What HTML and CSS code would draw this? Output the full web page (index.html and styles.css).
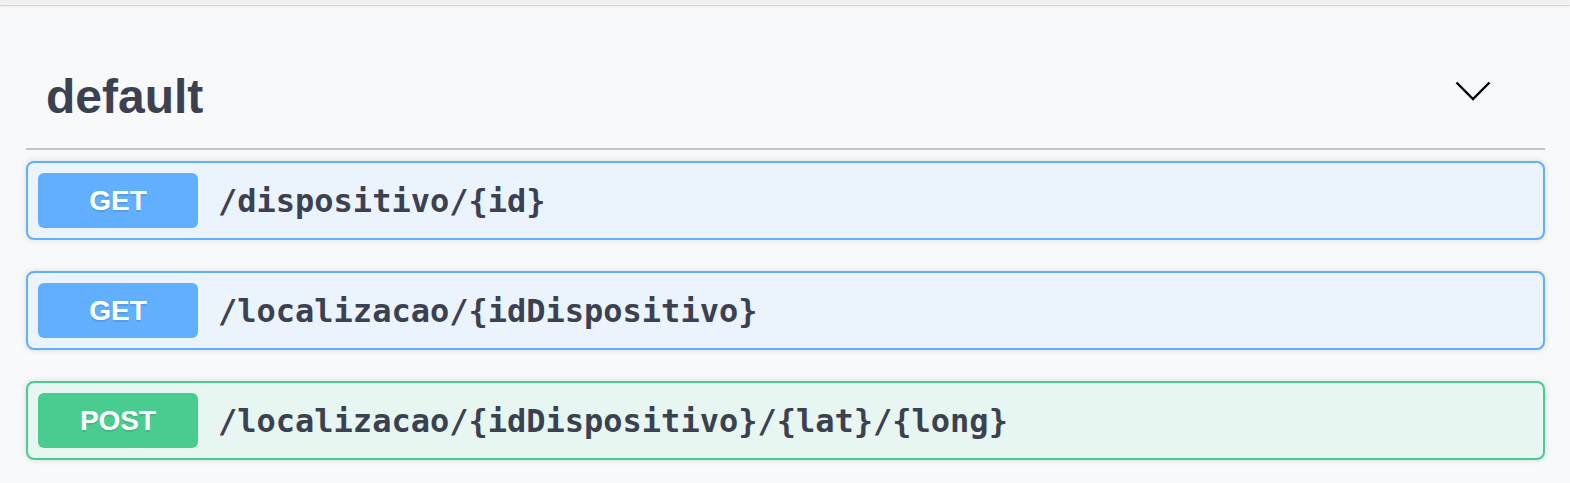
FILE: index.html
```html
<!DOCTYPE html>
<html lang="en">
<head>
<meta charset="utf-8">
<title>default</title>
<link rel="stylesheet" href="styles.css">
</head>
<body>
<div class="topbar"></div>
<section class="tag-section">
  <h3 class="tag-heading">
    <span class="tag-name">default</span>
    <svg class="chevron" width="36" height="20" viewBox="0 0 36 20" aria-hidden="true">
      <polyline points="1.5,1.5 18,18 34.5,1.5" fill="none" stroke="#000" stroke-width="2.4"/>
    </svg>
  </h3>
  <div class="opblock get">
    <span class="method">GET</span>
    <span class="path">/dispositivo/{id}</span>
  </div>
  <div class="opblock get">
    <span class="method">GET</span>
    <span class="path">/localizacao/{idDispositivo}</span>
  </div>
  <div class="opblock post">
    <span class="method">POST</span>
    <span class="path">/localizacao/{idDispositivo}/{lat}/{long}</span>
  </div>
</section>
</body>
</html>
```

FILE: styles.css
```css
html, body {
  margin: 0;
  padding: 0;
  background: #f8f9fb;
}

body {
  font-family: "Liberation Sans", Arial, sans-serif;
  color: #3b4151;
}

.topbar {
  height: 5px;
  background: #f1f1f2;
  box-shadow: 0 1px 2px rgba(0, 0, 0, 0.18);
}

.tag-section {
  padding: 43px 25px 0 26px;
}

.tag-heading {
  margin: 0 0 11px 0;
  padding: 20px 54px 22px 20px;
  display: flex;
  align-items: center;
  justify-content: space-between;
  border-bottom: 2px solid #c1c3c8;
  font-size: 48px;
  line-height: 58px;
  font-weight: 700;
  color: #3b4151;
}

.chevron {
  display: block;
  margin-top: -12px;
}

.opblock {
  display: flex;
  align-items: center;
  padding: 10px;
  margin-bottom: 31px;
  border: 2px solid;
  border-radius: 8px;
  box-shadow: 0 0 6px rgba(0, 0, 0, 0.12);
}

.opblock.get {
  background: #ebf3fc;
  border-color: #61affe;
}

.opblock.post {
  background: #e7f6f1;
  border-color: #49cc90;
}

.method {
  width: 160px;
  height: 55px;
  display: flex;
  align-items: center;
  justify-content: center;
  border-radius: 6px;
  color: #fff;
  font-size: 28px;
  font-weight: 700;
  text-shadow: 0 2px 0 rgba(0, 0, 0, 0.1);
}

.get .method {
  background: #61affe;
}

.post .method {
  background: #49cc90;
}

.path {
  padding: 0 20px;
  font-family: "DejaVu Sans Mono", monospace;
  font-weight: 700;
  font-size: 32px;
  color: #3b4151;
}
```
